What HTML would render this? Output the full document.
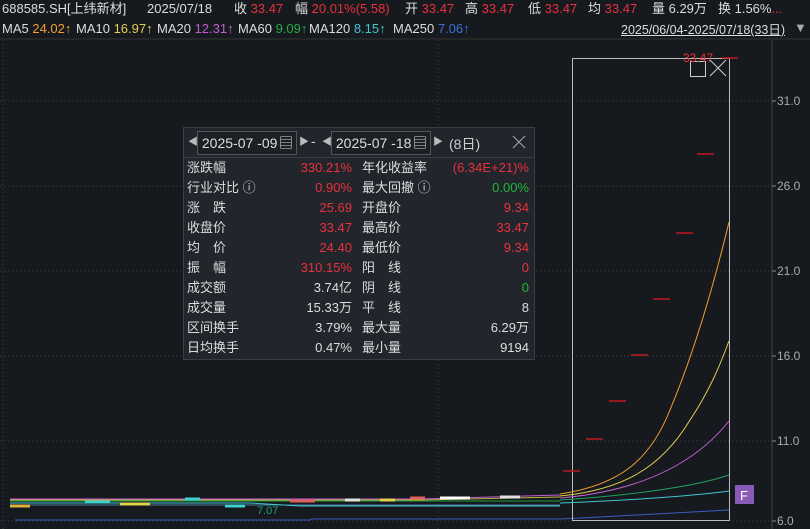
<!DOCTYPE html>
<html><head><meta charset="utf-8"><style>
body{margin:0;width:810px;height:529px;background:#16191d;overflow:hidden;font-family:"Liberation Sans","Noto Sans CJK SC",sans-serif;color:#ddd;position:relative}
.t{position:absolute;white-space:nowrap;font-size:13px;line-height:18px}
.r{color:#e8323c}.g{color:#1fb73a}
#pop{position:absolute;left:183px;top:127px;width:350px;height:231px;background:#22252b;border:1px solid #3a3d44}
.hd{position:absolute;top:3px;height:22px;border:1px solid #555;font-size:14px;line-height:22px;color:#ddd;background:#1c1f24}
</style></head><body>
<div class="t" style="left:2px;top:0">688585.SH[上纬新材]</div>
<div class="t" style="left:147px;top:0">2025/07/18</div>
<div class="t" style="left:234px;top:0">收 <span class="r">33.47</span></div>
<div class="t" style="left:295px;top:0">幅 <span class="r">20.01%(5.58)</span></div>
<div class="t" style="left:405px;top:0">开 <span class="r">33.47</span></div>
<div class="t" style="left:465px;top:0">高 <span class="r">33.47</span></div>
<div class="t" style="left:528px;top:0">低 <span class="r">33.47</span></div>
<div class="t" style="left:588px;top:0">均 <span class="r">33.47</span></div>
<div class="t" style="left:652px;top:0">量 6.29万</div>
<div class="t" style="left:718px;top:0">换 1.56%<span class="r">...</span></div>
<div class="t" style="left:2px;top:20px">MA5 <span style="color:#f0a030">24.02↑</span></div>
<div class="t" style="left:76px;top:20px">MA10 <span style="color:#e0d050">16.97↑</span></div>
<div class="t" style="left:157px;top:20px">MA20 <span style="color:#c060d0">12.31↑</span></div>
<div class="t" style="left:238px;top:20px">MA60 <span style="color:#20b040">9.09↑</span></div>
<div class="t" style="left:309px;top:20px">MA120 <span style="color:#40c8d0">8.15↑</span></div>
<div class="t" style="left:393px;top:20px">MA250 <span style="color:#4070e0">7.06↑</span></div>
<div class="t" style="left:621px;top:21px;font-size:12.5px;text-decoration:underline">2025/06/04-2025/07/18(33日)</div>
<div class="t" style="left:794px;top:19px;color:#aaa;font-size:13px">▼</div>
<svg width="810" height="529" style="position:absolute;left:0;top:0">
<line x1="0" y1="39" x2="810" y2="39" stroke="#333" />
<g stroke="#3c4048" stroke-dasharray="1,3">
<line x1="0" y1="101" x2="772" y2="101"/><line x1="0" y1="186" x2="772" y2="186"/><line x1="0" y1="271" x2="772" y2="271"/><line x1="0" y1="356" x2="772" y2="356"/><line x1="0" y1="441" x2="772" y2="441"/><line x1="0" y1="521" x2="772" y2="521"/>
<line x1="438" y1="40" x2="438" y2="529"/><line x1="3" y1="40" x2="3" y2="529"/>
</g>
<line x1="772" y1="40" x2="772" y2="529" stroke="#444"/>
<g stroke="#888"><line x1="772" y1="101" x2="776" y2="101"/><line x1="772" y1="186" x2="776" y2="186"/><line x1="772" y1="271" x2="776" y2="271"/><line x1="772" y1="356" x2="776" y2="356"/><line x1="772" y1="441" x2="776" y2="441"/><line x1="772" y1="521" x2="776" y2="521"/></g>
<g fill="#aaa" font-size="12" font-family="Liberation Sans"><text x="777" y="105">31.0</text><text x="777" y="190">26.0</text><text x="777" y="275">21.0</text><text x="777" y="360">16.0</text><text x="777" y="445">11.0</text><text x="777" y="525">6.0</text></g>
<g fill="none" stroke-width="1">
<path d="M10 505 H560" stroke="#4a7a9a"/>
<path d="M15 520 H310 L312 519 H560 L600 517" stroke="#3a5cc0"/>
<path d="M10 503 H250 L300 506 H560" stroke="#40c8d0"/>
<path d="M10 501 H560" stroke="#20a040"/>
<path d="M10 500 H420 L560 497" stroke="#c0b040"/>
<path d="M10 499 H420 L560 495" stroke="#c060d0"/>
</g>
<g stroke-width="3">
<line x1="10" y1="506" x2="30" y2="506" stroke="#e0b040"/><line x1="85" y1="502" x2="110" y2="502" stroke="#40d0d0"/><line x1="120" y1="504" x2="150" y2="504" stroke="#e0d050"/><line x1="185" y1="499" x2="200" y2="499" stroke="#40d0d0"/><line x1="225" y1="506" x2="245" y2="506" stroke="#40d0d0"/><line x1="290" y1="501" x2="315" y2="501" stroke="#e06060"/><line x1="345" y1="500" x2="360" y2="500" stroke="#e0e0e0"/><line x1="380" y1="500" x2="395" y2="500" stroke="#e0d050"/><line x1="410" y1="498" x2="425" y2="498" stroke="#e06060"/><line x1="440" y1="498" x2="470" y2="498" stroke="#ffffff"/><line x1="500" y1="497" x2="520" y2="497" stroke="#e0e0e0"/>
</g>
<text x="257" y="514" fill="#1fa070" font-size="11" font-family="Liberation Sans">7.07</text>
<rect x="572.5" y="58.5" width="157" height="462" fill="none" stroke="#bbb"/>
<rect x="690.5" y="61.5" width="15" height="15" fill="none" stroke="#ccc"/>
<path d="M710 60 L726 76 M726 60 L710 76" stroke="#ccc"/>
<text x="683" y="62" fill="#e8323c" font-size="12" font-family="Liberation Sans">33.47</text>
<g stroke="#c01820" stroke-width="1.5">
<line x1="563" y1="471" x2="580" y2="471"/><line x1="586" y1="439" x2="603" y2="439"/><line x1="609" y1="401" x2="626" y2="401"/><line x1="631" y1="355" x2="648" y2="355"/><line x1="653" y1="299" x2="670" y2="299"/><line x1="676" y1="233" x2="693" y2="233"/><line x1="697" y1="154" x2="714" y2="154"/><line x1="722" y1="58" x2="738" y2="58"/>
</g>
<g fill="none" stroke-width="1">
<path d="M560 494 C620 485 650 460 670 410 C695 350 715 280 729 222" stroke="#f0a030"/>
<path d="M560 496 C620 490 660 470 690 420 C710 390 720 365 729 341" stroke="#e0d050"/>
<path d="M560 498 C630 492 690 470 729 421" stroke="#c060d0"/>
<path d="M560 500 C640 495 700 485 729 475" stroke="#20a060"/>
<path d="M560 503 C640 500 700 495 729 491" stroke="#40c8d0"/>
<path d="M600 517 L729 510" stroke="#3a5cc0"/>
</g>
<rect x="735" y="485" width="19" height="19" fill="#8a5ab8"/>
<text x="740" y="500" fill="#fff" font-size="13" font-family="Liberation Sans">F</text>
</svg>
<div id="pop">
<div class="hd" style="left:13px;width:98px">&nbsp;2025-07 -09<span style="position:absolute;right:3px;top:0">▤</span></div>
<span style="position:absolute;left:4px;top:5px;font-size:10px;color:#bbb">◀</span>
<span style="position:absolute;left:115px;top:5px;font-size:10px;color:#bbb">▶</span>
<span style="position:absolute;left:127px;top:5px;font-size:14px;color:#ccc">-</span>
<span style="position:absolute;left:138px;top:5px;font-size:10px;color:#bbb">◀</span>
<div class="hd" style="left:147px;width:98px">&nbsp;2025-07 -18<span style="position:absolute;right:3px;top:0">▤</span></div>
<span style="position:absolute;left:249px;top:5px;font-size:10px;color:#bbb">▶</span>
<span style="position:absolute;left:265px;top:6px;font-size:14px;color:#ccc">(8日)</span>
<svg style="position:absolute;left:328px;top:7px" width="14" height="14"><path d="M1 1L13 13M13 1L1 13" stroke="#aaa"/></svg>
<div style="position:absolute;left:0;top:29px;width:350px;border-top:1px solid #3a3d44"></div>
</div>
<div style="position:absolute;left:187px;top:158px;width:342px;font-size:13px;line-height:20px">
<div style="position:relative;height:20px"><span style="position:absolute;left:0">涨跌幅</span><span class="r" style="position:absolute;right:177px">330.21%</span><span style="position:absolute;left:175px">年化收益率</span><span class="r" style="position:absolute;right:0">(6.34E+21)%</span></div>
<div style="position:relative;height:20px"><span style="position:absolute;left:0">行业对比 ⓘ</span><span class="r" style="position:absolute;right:177px">0.90%</span><span style="position:absolute;left:175px">最大回撤 ⓘ</span><span class="g" style="position:absolute;right:0">0.00%</span></div>
<div style="position:relative;height:20px"><span style="position:absolute;left:0">涨　跌</span><span class="r" style="position:absolute;right:177px">25.69</span><span style="position:absolute;left:175px">开盘价</span><span class="r" style="position:absolute;right:0">9.34</span></div>
<div style="position:relative;height:20px"><span style="position:absolute;left:0">收盘价</span><span class="r" style="position:absolute;right:177px">33.47</span><span style="position:absolute;left:175px">最高价</span><span class="r" style="position:absolute;right:0">33.47</span></div>
<div style="position:relative;height:20px"><span style="position:absolute;left:0">均　价</span><span class="r" style="position:absolute;right:177px">24.40</span><span style="position:absolute;left:175px">最低价</span><span class="r" style="position:absolute;right:0">9.34</span></div>
<div style="position:relative;height:20px"><span style="position:absolute;left:0">振　幅</span><span class="r" style="position:absolute;right:177px">310.15%</span><span style="position:absolute;left:175px">阳　线</span><span class="r" style="position:absolute;right:0">0</span></div>
<div style="position:relative;height:20px"><span style="position:absolute;left:0">成交额</span><span style="position:absolute;right:177px">3.74亿</span><span style="position:absolute;left:175px">阴　线</span><span class="g" style="position:absolute;right:0">0</span></div>
<div style="position:relative;height:20px"><span style="position:absolute;left:0">成交量</span><span style="position:absolute;right:177px">15.33万</span><span style="position:absolute;left:175px">平　线</span><span style="position:absolute;right:0">8</span></div>
<div style="position:relative;height:20px"><span style="position:absolute;left:0">区间换手</span><span style="position:absolute;right:177px">3.79%</span><span style="position:absolute;left:175px">最大量</span><span style="position:absolute;right:0">6.29万</span></div>
<div style="position:relative;height:20px"><span style="position:absolute;left:0">日均换手</span><span style="position:absolute;right:177px">0.47%</span><span style="position:absolute;left:175px">最小量</span><span style="position:absolute;right:0">9194</span></div>
</div>
</body></html>
